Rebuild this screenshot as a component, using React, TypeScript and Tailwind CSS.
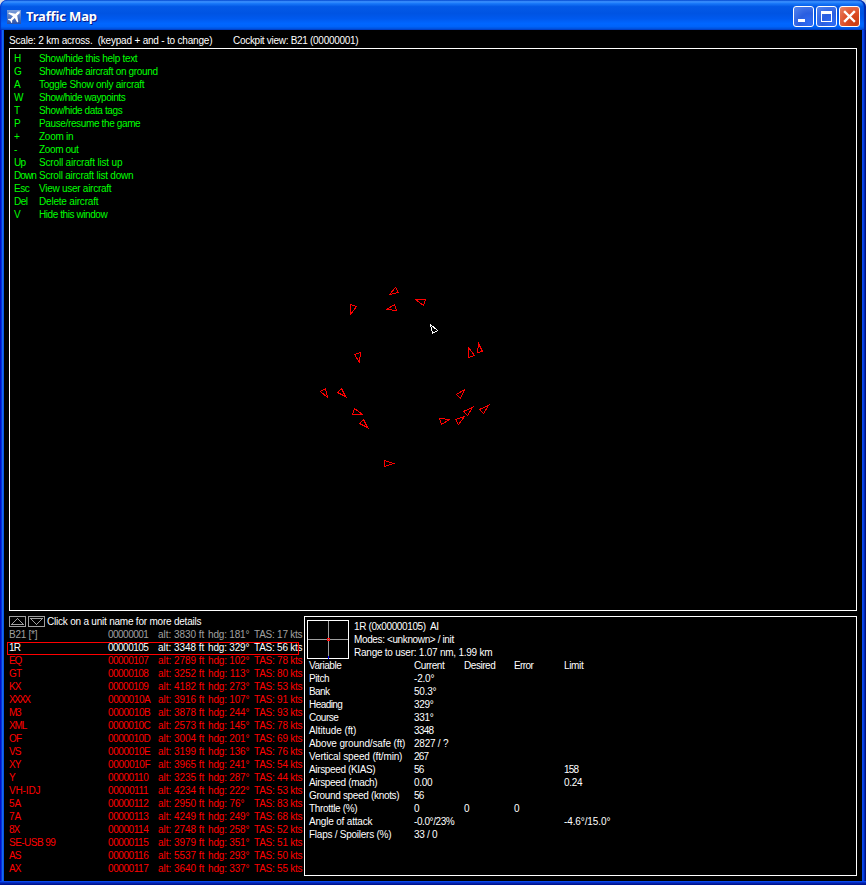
import React from "react";

const ctx = document.createElement("canvas").getContext("2d")!;

function spacing(text: string, width: number) {
  ctx.font = '10px "Liberation Sans"';
  return (width + 0.3 - ctx.measureText(text).width) / text.length;
}

/* A run of text whose letter spacing is adjusted to fill the given width. */
function T({ s, w }: { s: string; w: number }) {
  return (
    <span className="whitespace-pre" style={{ letterSpacing: `${spacing(s, w)}px` }}>
      {s}
    </span>
  );
}

const help: [string, number, string, number][] = [
  ["H", 7, "Show/hide this help text", 98],
  ["G", 7, "Show/hide aircraft on ground", 118.5],
  ["A", 7, "Toggle Show only aircraft", 105],
  ["W", 9, "Show/hide waypoints", 86],
  ["T", 6, "Show/hide data tags", 83],
  ["P", 6, "Pause/resume the game", 101],
  ["+", 6, "Zoom in", 34],
  ["-", 3, "Zoom out", 39],
  ["Up", 11, "Scroll aircraft list up", 83],
  ["Down", 21.5, "Scroll aircraft list down", 94],
  ["Esc", 15, "View user aircraft", 72],
  ["Del", 13, "Delete aircraft", 59],
  ["V", 7, "Hide this window", 68],
];

const units: [string, number, string, string, string, string][] = [
  ["B21 [*]", 28, "00000001", "3830", "181", "17"],
  ["1R", 11, "00000105", "3348", "329", "56"],
  ["EQ", 12, "00000107", "2789", "102", "78"],
  ["GT", 12, "00000108", "3252", "113", "80"],
  ["KX", 11, "00000109", "4182", "273", "53"],
  ["XXXX", 20, "0000010A", "3916", "107", "91"],
  ["M3", 11, "0000010B", "3878", "244", "93"],
  ["XML", 17, "0000010C", "2573", "145", "78"],
  ["OF", 12, "0000010D", "3004", "201", "69"],
  ["VS", 11, "0000010E", "3199", "136", "76"],
  ["XY", 11, "0000010F", "3965", "241", "54"],
  ["Y", 6, "00000110", "3235", "287", "44"],
  ["VH-IDJ", 31, "00000111", "4234", "222", "53"],
  ["5A", 12, "00000112", "2950", "76", "83"],
  ["7A", 12, "00000113", "4249", "249", "68"],
  ["8X", 10, "00000114", "2748", "258", "52"],
  ["SE-USB 99", 46, "00000115", "3979", "351", "51"],
  ["AS", 11, "00000116", "5537", "293", "50"],
  ["AX", 11, "00000117", "3640", "337", "55"],
];

type Cell = [string, number];
const none: Cell = ["", 0];
const vars: Cell[][] = [
  [["Variable", 32], ["Current", 30], ["Desired", 31], ["Error", 19], ["Limit", 19]],
  [["Pitch", 20], ["-2.0°", 20]],
  [["Bank", 20], ["50.3°", 22]],
  [["Heading", 33], ["329°", 19]],
  [["Course", 29], ["331°", 19]],
  [["Altitude (ft)", 47], ["3348", 19]],
  [["Above ground/safe (ft)", 96], ["2827 / ?", 34]],
  [["Vertical speed (ft/min)", 93], ["267", 14]],
  [["Airspeed (KIAS)", 66], ["56", 9], none, none, ["158", 14]],
  [["Airspeed (mach)", 68], ["0.00", 18], none, none, ["0.24", 18]],
  [["Ground speed (knots)", 90], ["56", 9]],
  [["Throttle (%)", 48], ["0", 5], ["0", 5], ["0", 5]],
  [["Angle of attack", 63], ["-0.0°/23%", 40], none, none, ["-4.6°/15.0°", 46]],
  [["Flaps / Spoilers (%)", 82], ["33 / 0", 23]],
];

const planes = [
  "395.5,287.5 389.5,294.5 398.5,292.5",
  "350.5,304.5 356.5,306.5 350.5,314.5",
  "394.5,304.5 386.5,309.5 396.5,310.5",
  "415.5,299.5 425.5,299.5 423.5,305.5",
  "354.5,354.5 360.5,352.5 359.5,362.5",
  "468.5,347.5 474.5,355.5 468.5,357.5",
  "478.5,343.5 482.5,351.5 477.5,352.5",
  "325.5,388.5 320.5,391.5 327.5,397.5",
  "341.5,388.5 337.5,392.5 345.5,396.5",
  "354.5,408.5 362.5,414.5 352.5,414.5",
  "363.5,419.5 359.5,423.5 367.5,427.5",
  "464.5,389.5 456.5,394.5 460.5,398.5",
  "472.5,407.5 463.5,411.5 467.5,415.5",
  "488.5,405.5 479.5,409.5 483.5,413.5",
  "439.5,418.5 449.5,419.5 441.5,424.5",
  "464.5,416.5 455.5,419.5 458.5,424.5",
  "384.5,460.5 393.5,463.5 384.5,466.5",
];

function TitleBar() {
  const btn =
    "flex h-[21px] w-[21px] items-center justify-center rounded-[3px] border border-white";
  const blue =
    " bg-[radial-gradient(circle_at_80%_85%,#2f6cf5_0%,#2a5ee0_45%,#5585ee_100%)]";
  return (
    <div className="flex h-[30px] items-center rounded-t-[7px] bg-[linear-gradient(180deg,#0a57dc_0%,#3c92ff_6%,#1877f8_12%,#0359e6_22%,#0054e3_45%,#0059ee_62%,#0066ff_78%,#0064fb_88%,#0054e0_95%,#003fc4_100%)] pl-[7px] pr-[6px] pt-[3px] shadow-[inset_-2px_0_1px_#0028a8,inset_1px_0_1px_#0038c8]">
      <svg width="14" height="14" viewBox="0 0 14 14" className="mr-[5px]">
        <defs>
          <linearGradient id="ico" x1="0" y1="0" x2="0" y2="1">
            <stop offset="0" stopColor="#7b9fdc" />
            <stop offset="1" stopColor="#2a50a8" />
          </linearGradient>
        </defs>
        <rect width="14" height="14" fill="url(#ico)" />
        <path
          d="M12.8 1.2 L10.8 1.4 L8.4 3.8 L2.2 2.6 L1.2 3.6 L6 6.3 L3.6 8.9 L1.6 8.8 L0.9 9.7 L3.3 10.7 L4.3 13 L5.2 12.4 L5.1 10.4 L7.8 8 L10.2 12.6 L11.3 11.7 L10.2 5.6 L12.6 3.2 Z"
          fill="#fff"
        />
      </svg>
      <div className="flex-1 whitespace-pre font-['Noto_Sans','Open_Sans',sans-serif] text-[13px] font-bold leading-none tracking-[-0.15px] text-white [text-shadow:1px_1px_0_#0a1883]">
        Traffic Map
      </div>
      <div className="flex gap-[2px]">
        <div className={btn + blue}>
          <svg width="19" height="19">
            <rect x="4" y="12" width="7" height="3" fill="#fff" />
          </svg>
        </div>
        <div className={btn + blue}>
          <svg width="19" height="19" shapeRendering="crispEdges">
            <path d="M4.5 4.5h10v10h-10z M4 5.5h11" fill="none" stroke="#fff" />
            <path d="M4 6.5h11" stroke="#fff" />
          </svg>
        </div>
        <div
          className={
            btn + " bg-[radial-gradient(circle_at_80%_85%,#c83c10_0%,#dd4c25_45%,#e98468_100%)]"
          }
        >
          <svg width="19" height="19">
            <path d="M5 5l9 9M14 5l-9 9" stroke="#fff" strokeWidth="2.4" strokeLinecap="square" />
          </svg>
        </div>
      </div>
    </div>
  );
}

function ScrollButton({ d }: { d: string }) {
  return (
    <svg width="17" height="11" shapeRendering="crispEdges" className="shrink-0">
      <path d={"M.5 .5h16v10h-16z" + d} fill="none" stroke="#a0a0a0" />
    </svg>
  );
}

export default function App() {
  return (
    <div className="h-[885px] w-[866px] bg-[#d8dce4]">
      <div className="flex h-[885px] w-[866px] flex-col overflow-hidden rounded-t-[7px] bg-[#0831d9] font-['Liberation_Sans',Arial,sans-serif] text-[10px] leading-[13px] text-white">
        <TitleBar />
        <div className="flex h-[855px] bg-[linear-gradient(180deg,transparent_851px,#0a48ea_851px,#0a48ea_852px,#0536d8_852px,#0428b8_853px,#001894_854px,#00108a_855px)]">
          <div className="h-[851px] w-[4px] bg-[linear-gradient(90deg,#0010c8_0_1px,#0831d9_1px_2px,#166aee_2px_3px,#0855e8_3px_4px)]" />
          <div className="h-[851px] w-[858px] bg-black pl-[5px] pr-[5px] pt-[4px]">
            <div className="flex h-[14px]">
              <div className="w-[224px]">
                <T s="Scale: 2 km across.  (keypad + and - to change)" w={203} />
              </div>
              <T s="Cockpit view: B21 (00000001)" w={125} />
            </div>
            <div className="relative h-[563px] w-[848px] border border-white pl-[4px] pt-[3px] text-[#00ff00]">
              {help.map(([k, kw, t, tw]) => (
                <div key={k} className="flex h-[13px]">
                  <div className="w-[25px]">
                    <T s={k} w={kw} />
                  </div>
                  <T s={t} w={tw} />
                </div>
              ))}
              <svg
                className="absolute left-0 top-0"
                width="846"
                height="561"
                viewBox="10 49 846 561"
                shapeRendering="crispEdges"
                fill="none"
              >
                {planes.map((p) => (
                  <polygon key={p} points={p} stroke="#ff0000" />
                ))}
                <polygon points="430.5,324.5 437.5,330.5 432.5,333.5" stroke="#fff" />
              </svg>
            </div>
            <div className="flex pt-[5px]">
              <div className="w-[295px] shrink-0">
                <div className="flex h-[12px] gap-[2px]">
                  <ScrollButton d="M2.5 8.5L8.5 2.5L14.5 8.5Z" />
                  <ScrollButton d="M2.5 2.5L8.5 8.5L14.5 2.5Z" />
                  <div className="-mt-px">
                    <T s="Click on a unit name for more details" w={154} />
                  </div>
                </div>
                {units.map(([n, nw, id, alt, hdg, tas], i) => (
                  <div
                    key={id}
                    className={
                      "relative flex h-[13px] whitespace-pre " +
                      (i === 0 ? "text-[#a0a0a0]" : i === 1 ? "text-white" : "text-[#ff0000]")
                    }
                  >
                    {i === 1 && (
                      <div className="absolute -left-[2px] top-[1px] h-[13px] w-[292px] border border-[#ff0000]" />
                    )}
                    <div className="w-[99px]">
                      <T s={n} w={nw} />
                    </div>
                    <div className="w-[50px]">
                      <T s={id} w={/[A-F]/.test(id) ? 42 : 40} />
                    </div>
                    <div className="w-[50px]">
                      <T s={`alt: ${alt} ft`} w={46} />
                    </div>
                    <div className="w-[46px]">
                      <T s={`hdg: ${hdg}°`} w={hdg.length === 3 ? 41 : 36} />
                    </div>
                    <T s={`TAS: ${tas} kts`} w={48} />
                  </div>
                ))}
              </div>
              <div className="h-[260px] w-[553px] border border-white pl-[2px] pt-[3px]">
                <div className="flex h-[39px] gap-[5px]">
                  <svg width="42" height="39" shapeRendering="crispEdges" fill="none">
                    <path d="M21.5 1v37M1 19.5h40" stroke="#a0a0a0" />
                    <rect x=".5" y=".5" width="41" height="38" stroke="#fff" />
                    <rect x="20.5" y="18.5" width="2" height="2" stroke="#ff0000" />
                    <path d="M21.5 36v3" stroke="#0000ff" />
                  </svg>
                  <div className="flex flex-col">
                    <T s="1R (0x00000105)  AI" w={85} />
                    <T s="Modes: <unknown> / init" w={99.5} />
                    <T s="Range to user: 1.07 nm, 1.99 km" w={138} />
                  </div>
                </div>
                {vars.map((row) => (
                  <div
                    key={row[0][0]}
                    className="grid h-[13px] grid-cols-[105px_50px_50px_50px_60px] pl-[2px]"
                  >
                    {row.map(([s, w], i) => (
                      <div key={i}>{s && <T s={s} w={w} />}</div>
                    ))}
                  </div>
                ))}
              </div>
            </div>
          </div>
          <div className="h-[851px] w-[4px] bg-[linear-gradient(90deg,#0a48ea_0_1px,#0640e0_1px_2px,#0428b0_2px_3px,#001080_3px_4px)]" />
        </div>
      </div>
    </div>
  );
}
